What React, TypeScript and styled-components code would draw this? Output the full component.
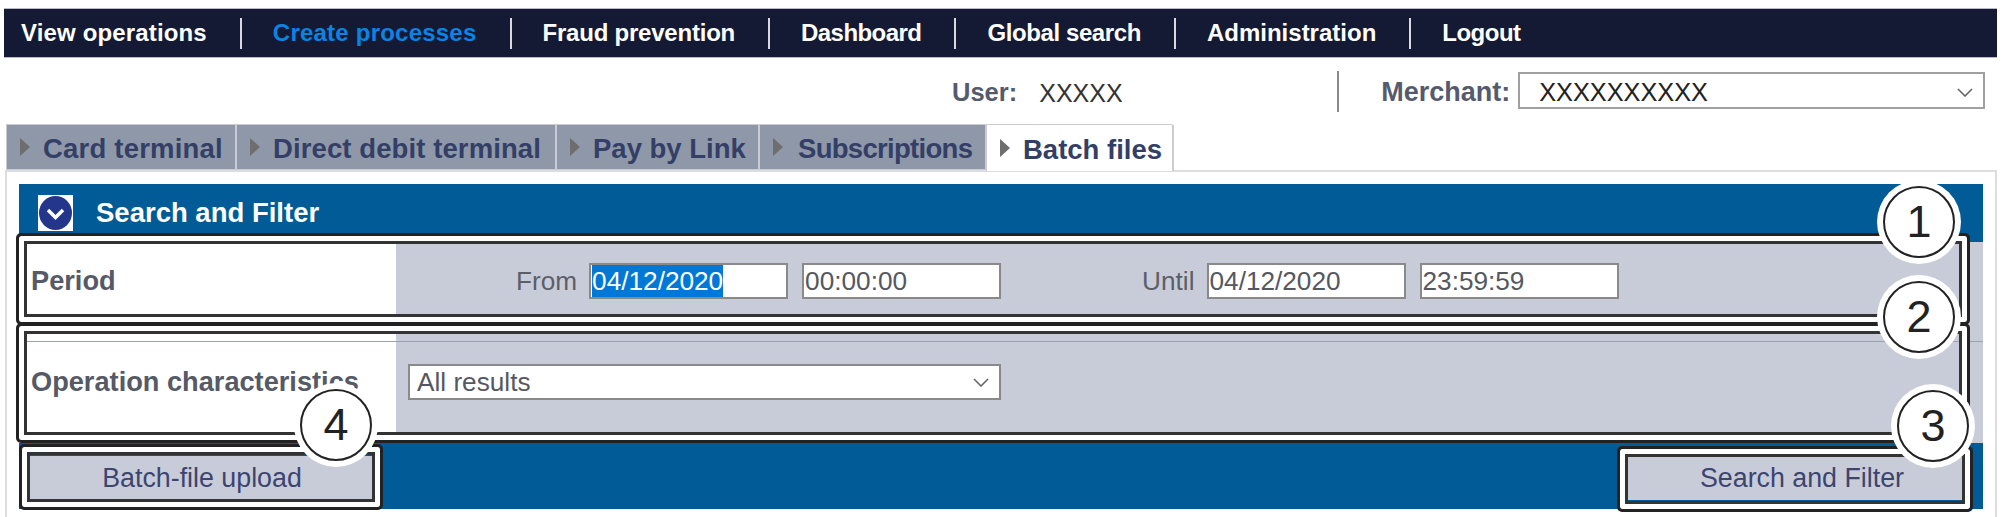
import React from "react";
import styled, { createGlobalStyle } from "styled-components";

const Global = createGlobalStyle`
  html, body { margin: 0; padding: 0; background: #fff; }
  body { font-family: "Liberation Sans", Arial, sans-serif; }
`;

const Page = styled.div`
  position: relative;
  width: 2001px;
  height: 517px;
  overflow: hidden;
  padding: 8px 4px 0;
  box-sizing: border-box;
`;

const NavBar = styled.nav`
  display: flex;
  align-items: center;
  height: 50px;
  background: #141a33;
  border-top: 1px solid #b9bcc6;
  border-bottom: 1px solid #b9bcc6;
  box-sizing: border-box;
  padding-left: 17px;
`;

const NavItem = styled.a<{ $active?: boolean; $track: number }>`
  font-size: 24px;
  font-weight: bold;
  letter-spacing: ${(p) => p.$track}px;
  color: ${(p) => (p.$active ? "#0a84e4" : "#ffffff")};
  white-space: nowrap;
`;

const NavSep = styled.span`
  width: 2px;
  height: 31px;
  background: #d8dae0;
  margin: 0 31px 0 33px;
`;

const UserBar = styled.div`
  display: flex;
  align-items: center;
  height: 66px;
  padding-left: 948px;
`;

const UserLabel = styled.span<{ $size: number }>`
  font-size: ${(p) => p.$size}px;
  font-weight: bold;
  color: #555a6e;
  white-space: nowrap;
  padding-top: 2px;
`;

const UserValue = styled.span`
  font-size: 25px;
  color: #333;
  margin-left: 22px;
  padding-top: 4px;
  width: 298px;
`;

const BarSep = styled.span`
  width: 2px;
  height: 41px;
  background: #888;
  margin-right: 42px;
`;

const MerchantSelect = styled.div`
  display: flex;
  align-items: center;
  justify-content: space-between;
  width: 467px;
  height: 37px;
  margin: -2px 0 0 8px;
  padding: 4px 10px 0 19px;
  border: 2px solid #a0a0a0;
  box-sizing: border-box;
  font-size: 25.3px;
  color: #222;
  overflow: hidden;
`;

const Tabs = styled.div`
  display: flex;
  height: 46px;
  margin-left: 2px;
`;

const Tab = styled.div<{ $width: number; $active?: boolean; $track?: number; $gap?: number }>`
  display: flex;
  align-items: center;
  gap: ${(p) => p.$gap ?? 13}px;
  width: ${(p) => p.$width}px;
  box-sizing: border-box;
  padding: 3px 0 0 13px;
  font-size: 27.5px;
  font-weight: bold;
  letter-spacing: ${(p) => p.$track ?? 0}px;
  color: #333f66;
  white-space: nowrap;
  background: ${(p) => (p.$active ? "#fff" : "#8f98a8")};
  border: 1px solid #c9ccd2;
  border-right-width: ${(p) => (p.$active ? "2px" : "1px")};
  border-bottom: ${(p) => (p.$active ? "none" : "1px solid #c9ccd2")};
  border-top-right-radius: ${(p) => (p.$active ? "3px" : "0")};
  height: ${(p) => (p.$active ? "47px" : "46px")};
  position: relative;
`;

const TabArrow = styled.span`
  width: 0;
  height: 0;
  margin-top: -3px;
  border-top: 9px solid transparent;
  border-bottom: 9px solid transparent;
  border-left: 10px solid #6e6e6e;
`;

const TabBody = styled.div`
  margin-left: 1px;
  height: 400px;
  padding: 12px 12px 0 12px;
  border: 2px solid #dcdde0;
`;

const Panel = styled.section`
  display: flex;
  flex-direction: column;
`;

const PanelHeader = styled.header`
  display: flex;
  align-items: center;
  gap: 23px;
  height: 58px;
  padding: 0 0 0 19px;
  box-sizing: border-box;
  background: #005b96;
  font-size: 27.5px;
  font-weight: bold;
  color: #fff;
`;

const ToggleIcon = styled.span`
  display: flex;
  align-items: center;
  justify-content: center;
  width: 35px;
  height: 36px;
  background: #fff;
`;

const Row = styled.div<{ $height: number; $top: number; $line?: boolean }>`
  display: grid;
  grid-template-columns: 377px 1fr;
  height: ${(p) => p.$height}px;
  box-sizing: border-box;
  background: #c8ccd8;
  border-top: ${(p) => (p.$line ? "1px solid #9aa3b2" : "none")};
  & > * { padding-top: ${(p) => p.$top}px; }
`;

const RowLabel = styled.div`
  background: #fff;
  padding-left: 12px;
  font-size: 27.2px;
  font-weight: bold;
  color: #555a66;
  line-height: 36px;
  white-space: nowrap;
  height: 100%;
  box-sizing: border-box;
`;

const RowValue = styled.div<{ $pad: number }>`
  display: flex;
  align-items: flex-start;
  padding-left: ${(p) => p.$pad}px;
  font-size: 26.2px;
  color: #5c5f68;
  line-height: 36px;
`;

const FieldLabel = styled.span<{ $gapLeft?: number }>`
  margin-left: ${(p) => p.$gapLeft ?? 0}px;
  margin-right: 12px;
  white-space: nowrap;
`;

const Field = styled.div<{ $gapLeft?: number }>`
  width: 199px;
  height: 36px;
  margin-left: ${(p) => p.$gapLeft ?? 0}px;
  padding-left: 1px;
  box-sizing: border-box;
  border: 2px solid #8a8a8a;
  background: #fff;
  color: #55585f;
  line-height: 32px;
  white-space: nowrap;
`;

const Selected = styled.span`
  display: inline-block;
  background: #0078d7;
  color: #fff;
`;

const SelectBox = styled.div`
  display: flex;
  align-items: center;
  justify-content: space-between;
  width: 593px;
  height: 36px;
  padding: 0 10px 0 7px;
  box-sizing: border-box;
  border: 2px solid #8a8a8a;
  background: #fff;
  color: #55585f;
  line-height: 32px;
`;

const PanelFooter = styled.footer`
  display: flex;
  justify-content: space-between;
  height: 66px;
  padding: 13px 19px 0 11px;
  box-sizing: border-box;
  background: #005b96;
`;

const ActionButton = styled.button<{ $width: number; $shift?: number }>`
  width: ${(p) => p.$width}px;
  height: 44px;
  margin: 0;
  padding: 0 0 0 ${(p) => p.$shift ?? 0}px;
  border: none;
  background: #c8ccd8;
  font-family: inherit;
  font-size: 26.8px;
  color: #3c4470;
`;

const Callout = styled.div<{ $x: number; $y: number; $w: number; $h: number }>`
  position: absolute;
  left: ${(p) => p.$x}px;
  top: ${(p) => p.$y}px;
  width: ${(p) => p.$w}px;
  height: ${(p) => p.$h}px;
  box-sizing: border-box;
  border: 3px solid #222;
  border-radius: 5px;
  box-shadow: inset 0 0 0 5px #fff, inset 0 0 0 8px #333;
`;

const Badge = styled.div<{ $cx: number; $cy: number }>`
  position: absolute;
  left: ${(p) => p.$cx - 36}px;
  top: ${(p) => p.$cy - 36}px;
  width: 72px;
  height: 72px;
  box-sizing: border-box;
  display: flex;
  align-items: center;
  justify-content: center;
  border: 2px solid #222;
  border-radius: 50%;
  background: #fff;
  box-shadow: 0 0 0 6px #fff;
  font-size: 45px;
  color: #222;
`;

const Chevron = ({ size = 16 }: { size?: number }) => (
  <svg width={size} height={size / 2 + 1} viewBox="0 0 16 9" fill="none">
    <path d="M1 1l7 7 7-7" stroke="#666" strokeWidth="1.6" />
  </svg>
);

const navItems: [string, number][] = [
  ["View operations", 0.15],
  ["Create processes", 0.22],
  ["Fraud prevention", -0.22],
  ["Dashboard", -0.55],
  ["Global search", -0.4],
  ["Administration", 0],
  ["Logout", -0.5],
];

const tabs: [string, number, number, number][] = [
  ["Card terminal", 230, 0.2, 13],
  ["Direct debit terminal", 320, 0.1, 13],
  ["Pay by Link", 203, 0, 13],
  ["Subscriptions", 227, -0.7, 15],
];

export default function App() {
  return (
    <Page>
      <Global />
      <NavBar>
        {navItems.map(([n, track], i) => (
          <React.Fragment key={n}>
            {i > 0 && <NavSep />}
            <NavItem $active={i === 1} $track={track}>
              {n}
            </NavItem>
          </React.Fragment>
        ))}
      </NavBar>
      <UserBar>
        <UserLabel $size={25.5}>User:</UserLabel>
        <UserValue>XXXXX</UserValue>
        <BarSep />
        <UserLabel $size={27}>Merchant:</UserLabel>
        <MerchantSelect>
          XXXXXXXXXX
          <Chevron />
        </MerchantSelect>
      </UserBar>
      <Tabs>
        {tabs.map(([t, w, track, gap]) => (
          <Tab key={t} $width={w} $track={track} $gap={gap}>
            <TabArrow />
            {t}
          </Tab>
        ))}
        <Tab $width={188} $active>
          <TabArrow />
          Batch files
        </Tab>
      </Tabs>
      <TabBody>
        <Panel>
          <PanelHeader>
            <ToggleIcon>
              <svg width="35" height="36" viewBox="0 0 35 36">
                <ellipse cx="17.5" cy="18" rx="16.5" ry="17" fill="#23368c" />
                <path d="M10 15l7.5 7.5L25 15" fill="none" stroke="#fff" strokeWidth="3.5" />
              </svg>
            </ToggleIcon>
            Search and Filter
          </PanelHeader>
          <Row $height={99} $top={21}>
            <RowLabel>Period</RowLabel>
            <RowValue $pad={120}>
              <FieldLabel>From</FieldLabel>
              <Field>
                <Selected>04/12/2020</Selected>
              </Field>
              <Field $gapLeft={14}>00:00:00</Field>
              <FieldLabel $gapLeft={141}>Until</FieldLabel>
              <Field>04/12/2020</Field>
              <Field $gapLeft={14}>23:59:59</Field>
            </RowValue>
          </Row>
          <Row $height={102} $top={22} $line>
            <RowLabel>Operation characteristics</RowLabel>
            <RowValue $pad={12}>
              <SelectBox>
                All results
                <Chevron />
              </SelectBox>
            </RowValue>
          </Row>
          <PanelFooter>
            <ActionButton $width={344}>Batch-file upload</ActionButton>
            <ActionButton $width={338} $shift={14}>
              Search and Filter
            </ActionButton>
          </PanelFooter>
        </Panel>
      </TabBody>

      <Callout $x={16} $y={233} $w={1954} $h={92} />
      <Callout $x={16} $y={323} $w={1954} $h={120} />
      <Callout $x={19} $y={444} $w={364} $h={66} />
      <Callout $x={1617} $y={446} $w={356} $h={66} />
      <Badge $cx={1919} $cy={222}>1</Badge>
      <Badge $cx={1919} $cy={317}>2</Badge>
      <Badge $cx={1933} $cy={426}>3</Badge>
      <Badge $cx={336} $cy={425}>4</Badge>
    </Page>
  );
}
